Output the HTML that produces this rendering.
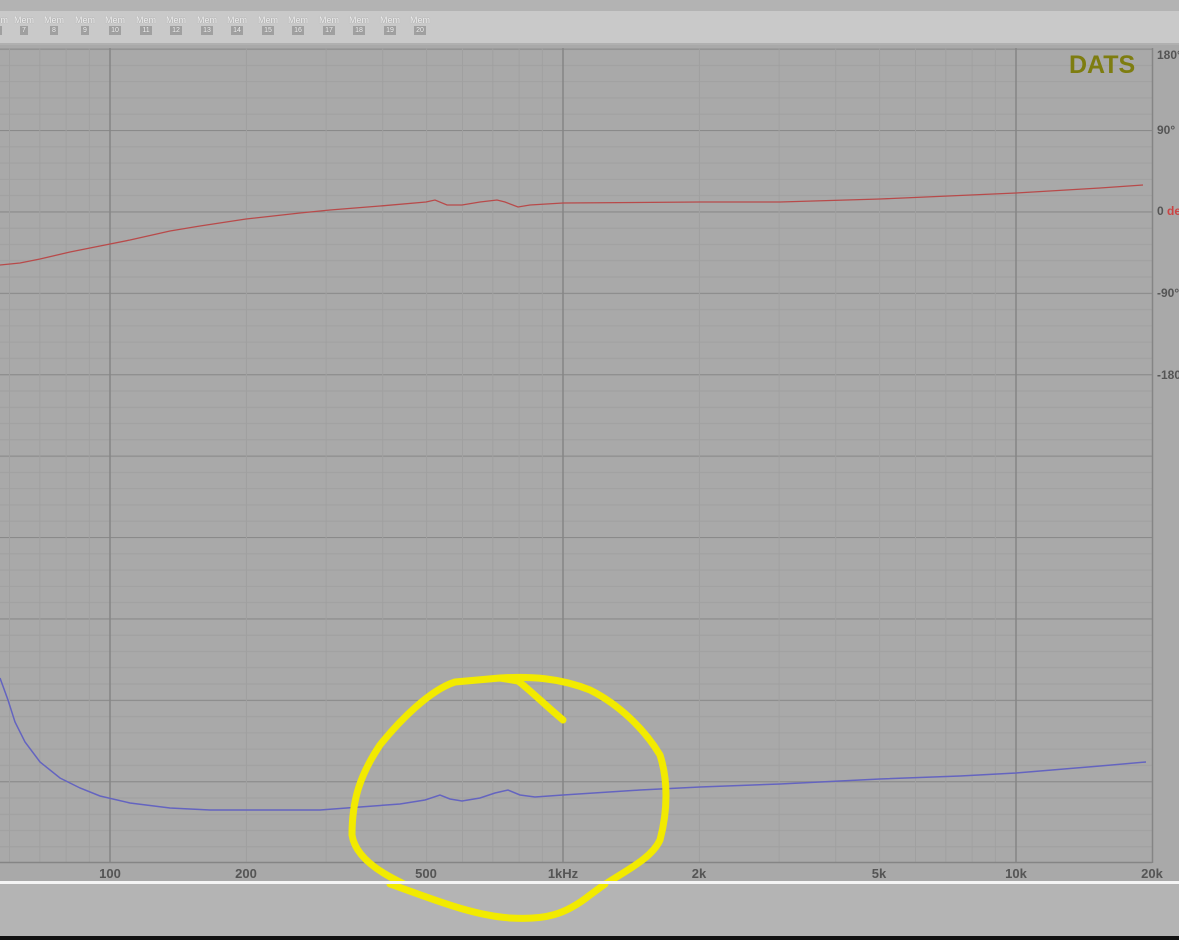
<!DOCTYPE html>
<html><head><meta charset="utf-8"><style>
body{margin:0;width:1179px;height:940px;overflow:hidden;background:#b4b4b4;font-family:"Liberation Sans",sans-serif}
.top{position:absolute;left:0;top:0;width:1179px;height:11px;background:#b3b3b3}
.tb{position:absolute;left:0;top:11px;width:1179px;height:32px;background:#c9c9c9;border-bottom:2px solid #b0b0b0}
.mem{position:absolute;top:5px;font-size:9px;color:#f0f0f0;line-height:9px;text-align:center;width:20px;text-shadow:0 0 1px #888}
.mem b{display:inline-block;background:#a0a0a0;font-weight:normal;font-size:7px;padding:0 2px}
.plotbg{position:absolute;left:0;top:45px;width:1179px;height:838px;background:#a9a9a9}
.bot{position:absolute;left:0;top:884px;width:1179px;height:52px;background:#b4b4b4}
.blk{position:absolute;left:0;top:936px;width:1179px;height:4px;background:#111}
.wl{position:absolute;left:0;top:881px;width:1179px;height:3px;background:#f4f4f4}
.xl{position:absolute;top:866px;font-size:13px;font-weight:bold;color:#555;transform:translateX(-50%)}
.yl{position:absolute;left:1157px;font-size:12px;font-weight:bold;color:#555;white-space:nowrap}
</style></head><body>
<div class="top"></div>
<div class="tb">
<div class="mem" style="left:-12px">Mem<br><b>6</b></div>
<div class="mem" style="left:14px">Mem<br><b>7</b></div>
<div class="mem" style="left:44px">Mem<br><b>8</b></div>
<div class="mem" style="left:75px">Mem<br><b>9</b></div>
<div class="mem" style="left:105px">Mem<br><b>10</b></div>
<div class="mem" style="left:136px">Mem<br><b>11</b></div>
<div class="mem" style="left:166px">Mem<br><b>12</b></div>
<div class="mem" style="left:197px">Mem<br><b>13</b></div>
<div class="mem" style="left:227px">Mem<br><b>14</b></div>
<div class="mem" style="left:258px">Mem<br><b>15</b></div>
<div class="mem" style="left:288px">Mem<br><b>16</b></div>
<div class="mem" style="left:319px">Mem<br><b>17</b></div>
<div class="mem" style="left:349px">Mem<br><b>18</b></div>
<div class="mem" style="left:380px">Mem<br><b>19</b></div>
<div class="mem" style="left:410px">Mem<br><b>20</b></div>
</div>
<div class="plotbg"></div>
<svg style="position:absolute;left:0;top:0" width="1179" height="940">
<defs><pattern id="h" x="0" y="48.6" width="1152" height="81.4" patternUnits="userSpaceOnUse">
<line x1="0" x2="1152" y1="0.5" y2="0.5" stroke="#8a8a8a" stroke-width="1.2"/>
<line x1="0" x2="1152" y1="16.8" y2="16.8" stroke="#a0a0a0"/>
<line x1="0" x2="1152" y1="33.1" y2="33.1" stroke="#a0a0a0"/>
<line x1="0" x2="1152" y1="49.3" y2="49.3" stroke="#a0a0a0"/>
<line x1="0" x2="1152" y1="65.6" y2="65.6" stroke="#a0a0a0"/>
</pattern></defs>
<rect x="0" y="48" width="1152" height="815" fill="url(#h)"/>
<g stroke="#a0a0a0" stroke-width="1">
<line x1="9.5" x2="9.5" y1="48" y2="862"/><line x1="39.8" x2="39.8" y1="48" y2="862"/><line x1="66.1" x2="66.1" y1="48" y2="862"/><line x1="89.3" x2="89.3" y1="48" y2="862"/>
<line x1="246.4" x2="246.4" y1="48" y2="862"/><line x1="326.1" x2="326.1" y1="48" y2="862"/><line x1="382.7" x2="382.7" y1="48" y2="862"/><line x1="426.6" x2="426.6" y1="48" y2="862"/><line x1="462.5" x2="462.5" y1="48" y2="862"/><line x1="492.8" x2="492.8" y1="48" y2="862"/><line x1="519.1" x2="519.1" y1="48" y2="862"/><line x1="542.3" x2="542.3" y1="48" y2="862"/>
<line x1="699.4" x2="699.4" y1="48" y2="862"/><line x1="779.1" x2="779.1" y1="48" y2="862"/><line x1="835.7" x2="835.7" y1="48" y2="862"/><line x1="879.6" x2="879.6" y1="48" y2="862"/><line x1="915.5" x2="915.5" y1="48" y2="862"/><line x1="945.8" x2="945.8" y1="48" y2="862"/><line x1="972.1" x2="972.1" y1="48" y2="862"/><line x1="995.3" x2="995.3" y1="48" y2="862"/>
</g>
<g stroke="#858585" stroke-width="1.5">
<line x1="110" x2="110" y1="48" y2="862"/><line x1="563" x2="563" y1="48" y2="862"/><line x1="1016" x2="1016" y1="48" y2="862"/>
<line x1="0" x2="1152" y1="862.5" y2="862.5"/>
<line x1="1152.5" x2="1152.5" y1="48" y2="863"/>
</g>
<polyline fill="none" stroke="#b84a4a" stroke-width="1.3" points="0,265 20,263 40,259 70,252 100,246 130,240 170,231 200,226 246,219 300,213 330,210 380,206 426,202 435,200 447,205 462,205 480,202 497,200 505,202 518,207 530,205 563,203 700,202 780,202 880,199 1016,193 1100,188 1143,185"/>
<polyline fill="none" stroke="#6464c0" stroke-width="1.5" points="0,678 8,700 15,722 25,742 40,762 60,778 80,788 100,796 130,803 170,808 210,810 260,810 320,810 360,807 400,804 425,800 440,795 450,799 462,801 480,798 495,793 508,790 520,795 535,797 563,795 640,790 700,787 780,784 880,779 960,776 1016,773 1100,766 1146,762"/>
<path fill="none" stroke="#f2ea00" stroke-width="7" stroke-linecap="round" stroke-linejoin="round" d="M563,720 C545,705 530,690 518,681 L500,678 L455,682 C430,690 400,720 380,745 C360,775 352,800 352,835 C355,855 375,870 400,882 C430,898 470,915 510,918 C545,920 565,915 590,895 C615,875 650,862 660,840 C668,810 668,780 660,755 C645,730 620,705 590,690 C560,678 530,676 500,678"/>
</svg>
<div style="position:absolute;left:1069px;top:51px;font-size:25px;font-weight:bold;color:#7e7d10">DATS</div>
<div class="yl" style="top:48px">180°</div>
<div class="yl" style="top:123px">90°</div>
<div class="yl" style="top:204px">0 <span style="color:#c44">deg</span></div>
<div class="yl" style="top:286px">-90°</div>
<div class="yl" style="top:368px">-180°</div>
<div class="wl"></div>
<div class="xl" style="left:110px">100</div>
<div class="xl" style="left:246px">200</div>
<div class="xl" style="left:426px">500</div>
<div class="xl" style="left:563px">1kHz</div>
<div class="xl" style="left:699px">2k</div>
<div class="xl" style="left:879px">5k</div>
<div class="xl" style="left:1016px">10k</div>
<div class="xl" style="left:1152px">20k</div>
<div class="bot"></div>
<div class="blk"></div>
<svg style="position:absolute;left:0;top:884px" width="700" height="52"><path fill="none" stroke="#f2ea00" stroke-width="7" stroke-linecap="round" d="M390,0 C430,14 470,31 510,34 C545,36 565,31 590,11 L605,0"/></svg>
</body></html>
